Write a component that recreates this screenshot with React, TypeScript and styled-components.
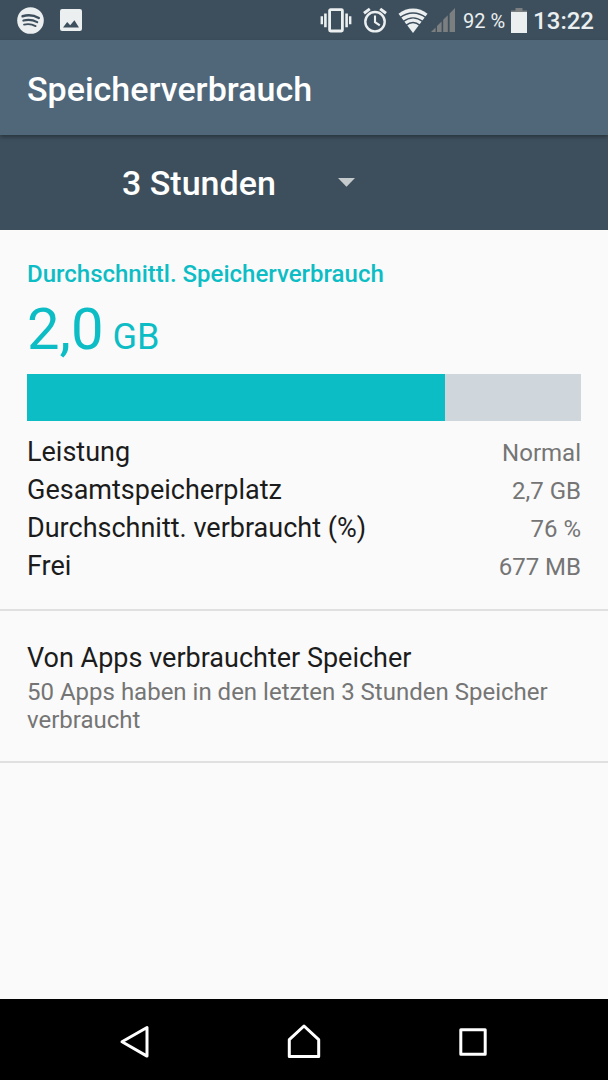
import React from "react";
import styled, { createGlobalStyle } from "styled-components";

const GlobalStyle = createGlobalStyle`
  *, *::before, *::after { box-sizing: border-box; }
  body {
    margin: 0;
    background: #fafafa;
    font-family: Roboto, "Noto Sans", sans-serif;
  }
`;

const Screen = styled.div`
  display: flex;
  flex-direction: column;
  min-height: 100vh;
`;

const StatusBar = styled.div`
  display: flex;
  align-items: center;
  justify-content: space-between;
  height: 40px;
  padding: 0 14px 0 17px;
  background: #3d4f5d;
  color: #eceff0;
`;

const StatusGroup = styled.div<{ $gap: number }>`
  display: flex;
  align-items: center;
  gap: ${(p) => p.$gap}px;
`;

const Icon = styled.svg`
  display: block;
  flex: none;
`;

const BatteryLevel = styled.span`
  font-size: 20px;
  line-height: 24px;
  padding-top: 2px;
`;

const Clock = styled.time`
  font-size: 24px;
  line-height: 28px;
  font-weight: 500;
  padding-top: 2px;
`;

const AppBar = styled.header`
  position: relative;
  display: flex;
  align-items: center;
  height: 95px;
  padding: 2px 27px 0;
  background: #50677a;
  box-shadow: 0 2px 4px rgba(0, 0, 0, 0.35);
`;

const Title = styled.h1`
  margin: 0;
  color: #fff;
  font-size: 34px;
  line-height: 40px;
  font-weight: 500;
`;

const PeriodBar = styled.div`
  display: flex;
  align-items: center;
  height: 95px;
  padding: 0 27px 0 122px;
  background: #3d4f5d;
`;

const PeriodPicker = styled.div`
  display: grid;
  grid-template-columns: 233px;
  align-items: center;

  & > * {
    grid-area: 1 / 1;
  }

  & > svg {
    justify-self: end;
    pointer-events: none;
  }
`;

const PeriodSelect = styled.select`
  appearance: none;
  width: 100%;
  height: 48px;
  margin: 0;
  padding: 0;
  border: 0;
  background: transparent;
  color: #fff;
  font-family: inherit;
  font-size: 34px;
  font-weight: 500;

  option {
    color: #212121;
  }
`;

const Content = styled.main`
  flex: 1;
  background: #fafafa;
`;

const Summary = styled.section`
  padding: 28px 27px 24px;
  border-bottom: 2px solid #e0e0e0;
`;

const SectionTitle = styled.h2`
  margin: 0;
  color: #0dbdc5;
  font-size: 24px;
  line-height: 32px;
  font-weight: 500;
`;

const Average = styled.p`
  margin: 0;
  padding-top: 2px;
  color: #0dbdc5;
  font-size: 58px;
  line-height: 74px;
`;

const Unit = styled.span`
  font-size: 36px;
`;

const UsageBar = styled.div`
  height: 47px;
  background: #cfd6dc;
`;

const UsageFill = styled.div`
  height: 100%;
  background: #0dbdc5;
`;

const Facts = styled.dl`
  margin: 12px 0 0;
`;

const Fact = styled.div`
  display: flex;
  align-items: baseline;
  justify-content: space-between;
  height: 38px;
  line-height: 38px;
`;

const FactName = styled.dt`
  color: #1c1c1c;
  font-size: 27px;
`;

const FactValue = styled.dd`
  margin: 0;
  color: #757575;
  font-size: 24px;
`;

const AppsButton = styled.button`
  display: block;
  width: 100%;
  padding: 29px 27px 27px;
  border: 0;
  border-bottom: 2px solid #e0e0e0;
  background: transparent;
  font-family: inherit;
  text-align: left;
`;

const AppsTitle = styled.span`
  display: block;
  color: #1c1c1c;
  font-size: 27px;
  line-height: 36px;
`;

const AppsText = styled.span`
  display: block;
  padding-top: 2px;
  color: #757575;
  font-size: 24px;
  line-height: 28px;
`;

const NavBar = styled.nav`
  display: flex;
  justify-content: center;
  align-items: center;
  gap: 129px;
  height: 81px;
  padding-top: 5px;
  background: #000;
`;

const NavButton = styled.button`
  display: flex;
  justify-content: center;
  width: 40px;
  padding: 0;
  border: 0;
  background: transparent;
`;

const SpotifyIcon = () => (
  <Icon width="27" height="27" viewBox="0 0 27 27" fill="none" stroke="#3d4f5d" strokeLinecap="round">
    <circle cx="13.5" cy="13.5" r="13.3" fill="#eceff0" stroke="none" />
    <path d="M5.6 9.3C11 7.7 17 8.3 21.8 11" strokeWidth="2.5" />
    <path d="M6.4 13.6C11 12.3 16 12.9 20.2 15.2" strokeWidth="2.1" />
    <path d="M7 17.6C11 16.6 15 17.1 18.6 19.1" strokeWidth="1.8" />
  </Icon>
);

const PictureIcon = () => (
  <Icon width="22" height="22" viewBox="0 0 22 22">
    <rect width="22" height="22" rx="2.2" fill="#eceff0" />
    <path d="M3 18.5 7.2 13l3 3.2 4.2-5L19 18.5Z" fill="#3d4f5d" />
  </Icon>
);

const VibrateIcon = () => (
  <Icon width="32" height="26" viewBox="0 0 32 26" fill="none" stroke="#eceff0">
    <rect x="9.6" y="2.6" width="12.8" height="21.4" rx="1" strokeWidth="2.8" />
    <path d="M5.4 6.4v13.8M26.6 6.4v13.8" strokeWidth="2.6" />
    <path d="M1.8 9.2v8M30.2 9.2v8" strokeWidth="2.4" />
  </Icon>
);

const AlarmIcon = () => (
  <Icon width="24" height="26" viewBox="0 0 24 26" fill="none" stroke="#eceff0">
    <circle cx="12" cy="14.7" r="9.7" strokeWidth="2.4" />
    <path d="M12 8.5v6.6l4.8 3.2" strokeWidth="2.1" />
    <path d="M1 6.2 6.8 1.9M23 6.2l-5.8-4.3" strokeWidth="3" />
  </Icon>
);

const WifiIcon = () => (
  <Icon width="30" height="25" viewBox="0 0 30 25">
    <path d="M15 25 0.5 5.8C9 -1.4 21 -1.4 29.5 5.8Z" fill="#eceff0" />
    <g fill="none" stroke="#3d4f5d" strokeWidth="1.4">
      <path d="M2 9.6C10 3.4 20 3.4 28 9.6" />
      <path d="M5 13.6C11.6 8.7 18.4 8.7 25 13.6" />
      <path d="M8 17.4C12.6 13.7 17.4 13.7 22 17.4" />
    </g>
  </Icon>
);

const SignalIcon = () => (
  <Icon width="24" height="24" viewBox="0 0 24 24" fill="#7c7f80">
    <path d="M0 24 4.6 19.4V24ZM6 24V18L10.6 13.4V24ZM12.2 24V11.8L16.8 7.2V24ZM18.6 24V5.4L24 0V24Z" />
  </Icon>
);

const BatteryIcon = () => (
  <Icon width="16" height="25" viewBox="0 0 16 25">
    <path d="M4.5 0h7v2.5H16V5H0V2.5h4.5Z" fill="#7c7f80" />
    <rect y="4" width="16" height="21" fill="#eceff0" />
  </Icon>
);

const ArrowIcon = () => (
  <Icon width="17" height="9" viewBox="0 0 17 9">
    <path d="M0 0h17L8.5 8.7Z" fill="#c5cacd" />
  </Icon>
);

const BackIcon = () => (
  <Icon width="32" height="34" viewBox="0 0 32 34" fill="none" stroke="#fff" strokeWidth="3" strokeLinejoin="round">
    <path d="M28 2.5v28.6L3 16.8Z" />
  </Icon>
);

const HomeIcon = () => (
  <Icon width="34" height="36" viewBox="0 0 34 36" fill="none" stroke="#fff" strokeWidth="3" strokeLinejoin="round">
    <path d="M17 2 31.7 15.7V32.5H2.3V15.7Z" />
  </Icon>
);

const RecentsIcon = () => (
  <Icon width="28" height="28" viewBox="0 0 28 28" fill="none" stroke="#fff" strokeWidth="3" strokeLinejoin="round">
    <rect x="1.8" y="1.8" width="24.4" height="24.4" />
  </Icon>
);

const facts = [
  { name: "Leistung", value: "Normal" },
  { name: "Gesamtspeicherplatz", value: "2,7 GB" },
  { name: "Durchschnitt. verbraucht (%)", value: "76 %" },
  { name: "Frei", value: "677 MB" },
];

const usedShare = 75.5;

export default function App() {
  return (
    <Screen>
      <GlobalStyle />
      <StatusBar>
        <StatusGroup $gap={16}>
          <SpotifyIcon />
          <PictureIcon />
        </StatusGroup>
        <StatusGroup $gap={8}>
          <StatusGroup $gap={3}>
            <StatusGroup $gap={11}>
              <VibrateIcon />
              <AlarmIcon />
              <WifiIcon />
            </StatusGroup>
            <SignalIcon />
          </StatusGroup>
          <StatusGroup $gap={6}>
            <BatteryLevel>92 %</BatteryLevel>
            <BatteryIcon />
            <Clock>13:22</Clock>
          </StatusGroup>
        </StatusGroup>
      </StatusBar>
      <AppBar>
        <Title>Speicherverbrauch</Title>
      </AppBar>
      <PeriodBar>
        <PeriodPicker>
          <PeriodSelect aria-label="Zeitraum" defaultValue="3">
            <option value="3">3 Stunden</option>
          </PeriodSelect>
          <ArrowIcon />
        </PeriodPicker>
      </PeriodBar>
      <Content>
        <Summary>
          <SectionTitle>Durchschnittl. Speicherverbrauch</SectionTitle>
          <Average>
            2,0<Unit> GB</Unit>
          </Average>
          <UsageBar>
            <UsageFill style={{ width: `${usedShare}%` }} />
          </UsageBar>
          <Facts>
            {facts.map((fact) => (
              <Fact key={fact.name}>
                <FactName>{fact.name}</FactName>
                <FactValue>{fact.value}</FactValue>
              </Fact>
            ))}
          </Facts>
        </Summary>
        <AppsButton type="button">
          <AppsTitle>Von Apps verbrauchter Speicher</AppsTitle>
          <AppsText>50 Apps haben in den letzten 3 Stunden Speicher verbraucht</AppsText>
        </AppsButton>
      </Content>
      <NavBar>
        <NavButton type="button" aria-label="Zurück">
          <BackIcon />
        </NavButton>
        <NavButton type="button" aria-label="Startseite">
          <HomeIcon />
        </NavButton>
        <NavButton type="button" aria-label="Letzte Apps">
          <RecentsIcon />
        </NavButton>
      </NavBar>
    </Screen>
  );
}
